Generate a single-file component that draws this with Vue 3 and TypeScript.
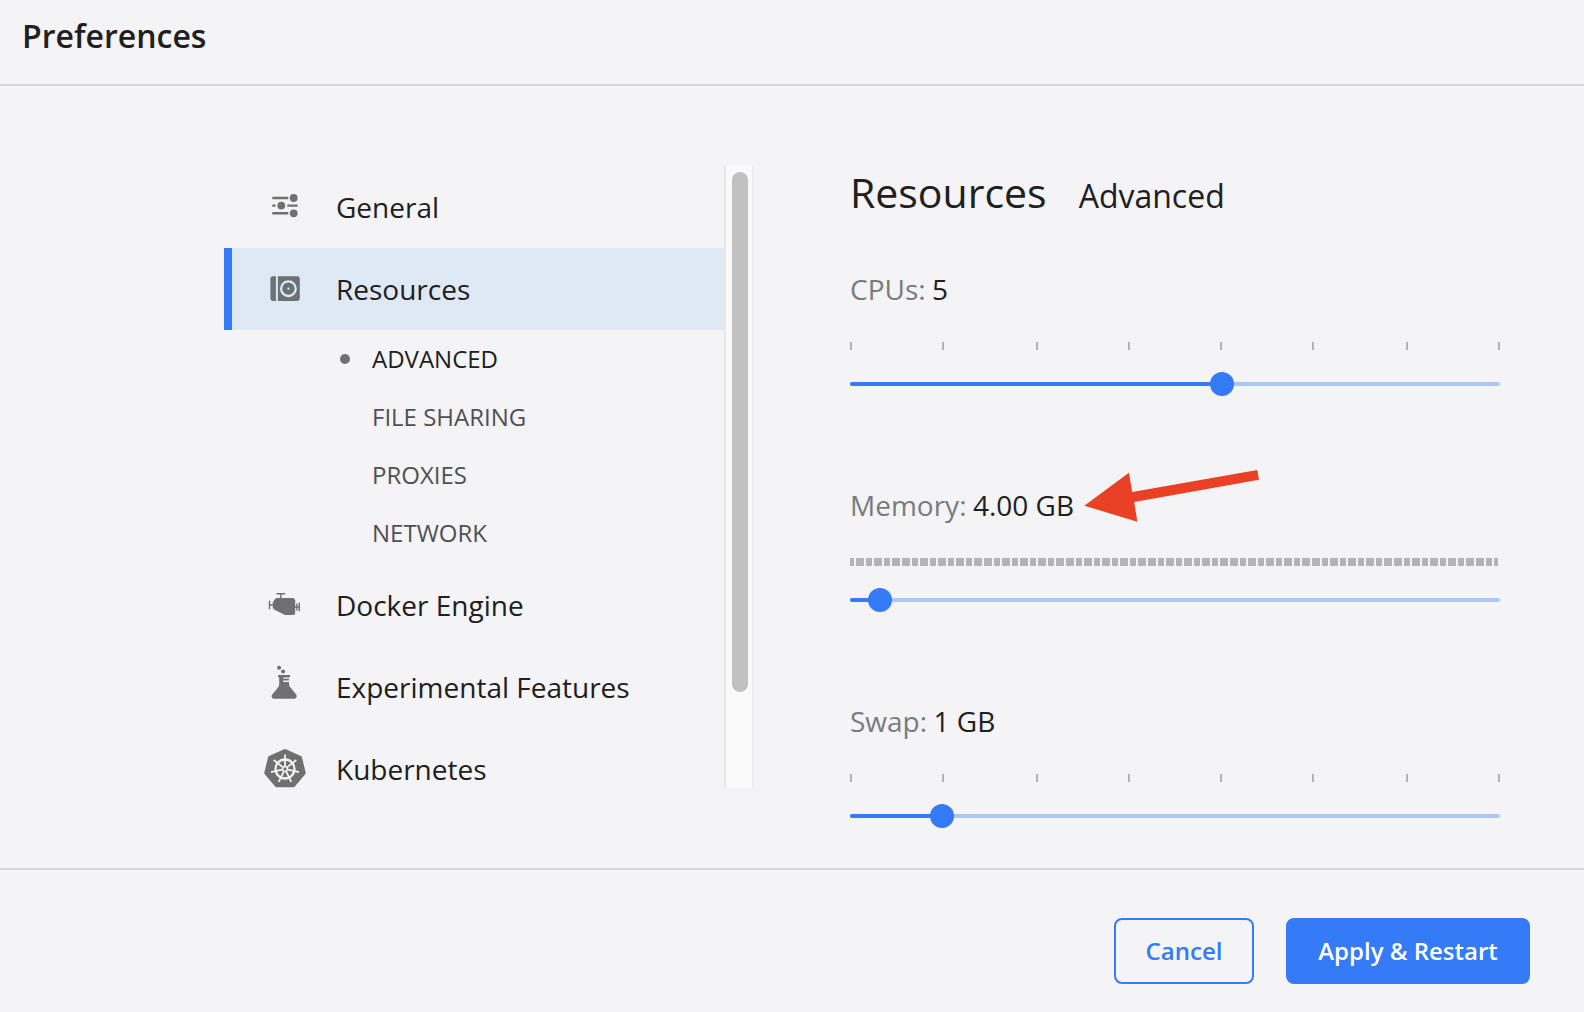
<script setup lang="ts">
interface Section {
  id: string
  label: string
  children?: string[]
}

interface Setting {
  label: string
  value: string
  position: number
  ticks: number[][]
}

const TRACK = 650

const sections: Section[] = [
  { id: 'general', label: 'General' },
  { id: 'resources', label: 'Resources', children: ['ADVANCED', 'FILE SHARING', 'PROXIES', 'NETWORK'] },
  { id: 'engine', label: 'Docker Engine' },
  { id: 'experimental', label: 'Experimental Features' },
  { id: 'kubernetes', label: 'Kubernetes' },
]

// Each tick is [x, width], snapped to the two pixel grid
const sparse: number[][] = [0, 92, 186, 278, 370, 462, 556, 648].map((x) => [x, 2])

const starts: number[] = [0]
for (let i = 0; i <= 70; i++) starts.push(2 * Math.floor(3.66 + i * 4.557))
const dense: number[][] = starts.map((x, i) => [x, (i < starts.length - 1 ? starts[i + 1] - 2 : 648) - x])

const settings: Setting[] = [
  { label: 'CPUs:', value: '5', position: 372, ticks: sparse },
  { label: 'Memory:', value: '4.00 GB', position: 30, ticks: dense },
  { label: 'Swap:', value: '1 GB', position: 92, ticks: sparse },
]

const polar = (r: number, i: number, squash = 1): string => {
  const a = (i * 2 * Math.PI) / 7 - Math.PI / 2
  return `${(24 + r * Math.cos(a)).toFixed(2)},${(41 + r * squash * Math.sin(a)).toFixed(2)}`
}
const heptagon = Array.from({ length: 7 }, (_, i) => polar(19.2, i, 0.94)).join(' ')
const spokes = Array.from({ length: 7 }, (_, i) => `M${polar(3, i)}L${polar(14.4, i)}`).join('')
</script>

<template>
  <div class="window">
    <header class="titlebar"><h1>Preferences</h1></header>
    <main class="content">
      <nav class="sidebar">
        <div class="menu">
          <template v-for="s in sections" :key="s.id">
            <div class="item" :class="{ active: s.id === 'resources' }">
              <svg class="icon" width="48" height="82" viewBox="0 0 48 82">
                <g v-if="s.id === 'general'" fill="#707070">
                  <path d="M11.3 32H27.3M11.3 39.6H14.6M26.3 39.6H36.6M11.3 47.3H27.3" stroke="#707070" stroke-width="2.4" />
                  <circle cx="32.7" cy="32" r="3.9" />
                  <circle cx="20.3" cy="39.6" r="3.9" />
                  <circle cx="32.7" cy="47.3" r="3.9" />
                </g>
                <g v-else-if="s.id === 'resources'">
                  <rect x="9.4" y="28.2" width="29.4" height="24.8" rx="2.4" fill="#6b7175" />
                  <path d="M15.9 28V53.2" stroke="#dde9f5" stroke-width="2" />
                  <circle cx="27.4" cy="40.7" r="7.3" fill="none" stroke="#dde9f5" stroke-width="2.3" />
                  <circle cx="27.4" cy="40.7" r="1.1" fill="#dde9f5" />
                </g>
                <g v-else-if="s.id === 'engine'" fill="#707070">
                  <path d="M15.3 34H32.5L34.2 36V49.5L32.8 51H24L13 45.6V36.2Z" />
                  <path d="M15.5 29.7H24.2M19.8 29.7V35M8.5 36.7V45.2M8.5 41H14M38.3 38.7V47.2M34 43H38.3M35.9 39.5V46.5M12.5 37.5V44.5" fill="none" stroke="#707070" stroke-width="1.4" />
                </g>
                <g v-else-if="s.id === 'experimental'" fill="#707070">
                  <circle cx="18.1" cy="21.7" r="2" />
                  <circle cx="22.1" cy="25.4" r="2" />
                  <path d="M17 29H29V31.2H28V31.4H22.2V32.8H28V34.6H22.2V36H28V38.2H28C28 40.5 30 42 31.5 44L35 48.2C36.5 50.5 35.3 52.7 33 52.7H13.3C11 52.7 9.8 50.5 11.3 48.2L15 44C16.5 42 18.2 40.5 18.2 38V31.2H17Z" />
                </g>
                <g v-else fill="none" stroke="#f4f4f6">
                  <polygon :points="heptagon" fill="#707070" stroke="#707070" stroke-width="4" stroke-linejoin="round" />
                  <circle cx="24" cy="41" r="9.5" stroke-width="2.3" />
                  <path :d="spokes" stroke-width="1.8" />
                  <circle cx="24" cy="41" r="2.4" stroke-width="1.5" />
                </g>
              </svg>
              <span>{{ s.label }}</span>
            </div>
            <ul v-if="s.children" class="sub">
              <li v-for="(c, i) in s.children" :key="c" :class="{ current: i === 0 }">{{ c }}</li>
            </ul>
          </template>
        </div>
        <div class="scrollbar"><div class="thumb"></div></div>
      </nav>
      <section class="panel">
        <h2>Resources<small>Advanced</small></h2>
        <div v-for="s in settings" :key="s.label" class="setting">
          <div class="caption"><span class="name">{{ s.label }}</span><span class="value">{{ s.value }}</span>
            <svg v-if="s.label === 'Memory:'" class="pointer" width="180" height="56" viewBox="0 0 180 56">
              <path d="M4.3 37.7L48.9 4.8L52.2 24.1L177.3 2L179 11.8L54.2 34L57.3 53.7Z" fill="#ea4025" />
            </svg>
          </div>
          <svg class="ticks" :width="TRACK" height="8" shape-rendering="crispEdges">
            <rect v-for="t in s.ticks" :key="t[0]" :x="t[0]" y="0" :width="t[1]" height="8" fill="#b4b4b6" />
          </svg>
          <div class="track">
            <div class="fill" :style="{ width: s.position + 'px' }"></div>
            <div class="knob"></div>
          </div>
        </div>
      </section>
    </main>
    <footer class="actions">
      <button class="btn">Cancel</button>
      <button class="btn primary">Apply &amp; Restart</button>
    </footer>
  </div>
</template>

<style>
body {
  margin: 0;
  background: #f4f4f6;
}
</style>

<style scoped>
.window {
  display: flex;
  flex-direction: column;
  width: 1584px;
  height: 1012px;
  overflow: hidden;
  box-sizing: border-box;
  background: #f4f4f6;
  color: #202021;
  font-family: 'Open Sans', 'Noto Sans', sans-serif;
  font-size: 28px;
}
.titlebar {
  height: 84px;
  flex: none;
  padding-left: 22px;
  border-bottom: 2px solid #d6d6d8;
}
h1 {
  margin: 0;
  font-size: 32px;
  font-weight: 600;
  line-height: 72px;
}
.content {
  display: flex;
  flex: 1;
  min-height: 0;
  padding: 80px 84px 0 224px;
  overflow: hidden;
}
.sidebar {
  display: flex;
  width: 530px;
  height: 622px;
  flex: none;
  overflow: hidden;
}
.menu {
  width: 500px;
}
.item {
  display: flex;
  align-items: center;
  height: 82px;
  box-sizing: border-box;
  padding-left: 29px;
  border-left: 8px solid transparent;
  line-height: 82px;
  white-space: nowrap;
}
.item.active {
  border-left-color: #357af6;
  background: #dee9f5;
}
.icon {
  flex: none;
  margin-right: 27px;
}
.sub {
  margin: 0;
  padding: 0 0 2px 116px;
  list-style: none;
  font-size: 24px;
  line-height: 58px;
  color: #505052;
}
.sub li {
  display: flex;
  align-items: center;
}
.sub li::before {
  content: '';
  width: 10px;
  height: 10px;
  margin-right: 22px;
  border-radius: 50%;
}
.sub .current {
  color: #202021;
}
.sub .current::before {
  background: #707070;
}
.scrollbar {
  width: 26px;
  padding-top: 6px;
  border-left: 2px solid #e8e8e8;
  border-right: 2px solid #ededed;
  background: #fafafa;
}
.thumb {
  width: 16px;
  height: 520px;
  margin-left: 6px;
  border-radius: 8px;
  background: #c1c1c1;
}
.panel {
  width: 650px;
  margin-left: 96px;
}
h2 {
  display: flex;
  align-items: baseline;
  margin: 0 0 50px;
  font-size: 41px;
  font-weight: 400;
  line-height: 52px;
}
h2 small {
  margin-left: 32px;
  font-size: 32px;
  line-height: 40px;
}
.setting {
  display: flex;
  flex-direction: column;
  height: 216px;
}
.caption {
  display: flex;
  position: relative;
  height: 42px;
  line-height: 42px;
  white-space: nowrap;
}
.name {
  margin-right: 6.4px;
  color: #777c7f;
}
.pointer {
  position: absolute;
  left: 230px;
  top: -16px;
}
.ticks {
  display: block;
  margin: 32px 0;
}
.track {
  display: flex;
  align-items: center;
  height: 4px;
  border-radius: 2px;
  background: #a9c5f8;
}
.fill {
  height: 4px;
  border-radius: 2px;
  background: #357af6;
}
.knob {
  width: 24px;
  height: 24px;
  flex: none;
  margin-left: -12px;
  border-radius: 50%;
  background: #357af6;
}
.actions {
  display: flex;
  justify-content: flex-end;
  gap: 32px;
  height: 94px;
  flex: none;
  padding: 48px 54px 0 0;
  border-top: 2px solid #d6d6d8;
}
.btn {
  width: 140px;
  height: 66px;
  padding: 0;
  border: 2px solid #357af6;
  border-radius: 8px;
  background: transparent;
  color: #357af6;
  font-family: inherit;
  font-size: 24px;
  font-weight: 600;
  line-height: 62px;
}
.btn.primary {
  width: 244px;
  background: #357af6;
  color: #fff;
}
</style>
